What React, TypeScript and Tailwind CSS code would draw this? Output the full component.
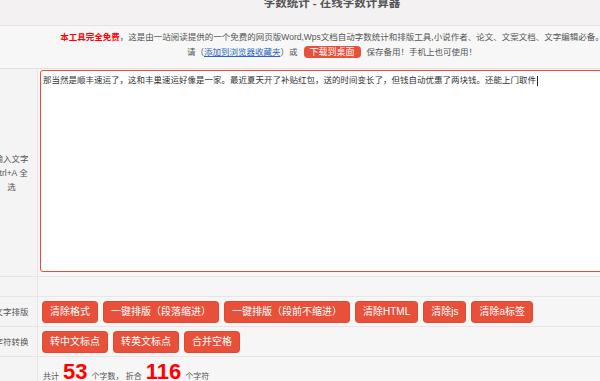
import React from 'react';

const font = "font-['Liberation_Sans','Noto_Sans_CJK_SC',sans-serif]";

function Btn({ children }: { children: React.ReactNode }) {
    return (
        <button className="h-[20px] px-[7px] rounded-[3px] bg-[#e8503a] text-white text-[10px] leading-[20px] whitespace-nowrap shadow-[0_0_0_1px_#e04a35]">
            {children}
        </button>
    );
}

function Row({ label, children, className = '' }: { label?: React.ReactNode; children?: React.ReactNode; className?: string }) {
    return (
        <div className={`flex border-b border-[#e6e6e6] ${className}`}>
            <div className="w-[52px] shrink-0 border-r border-[#e6e6e6] bg-[#f4f4f4] flex items-center justify-center px-[7px] text-center text-[8.5px] leading-[14px] text-[#555]">
                {label}
            </div>
            <div className="flex-1 bg-[#f6f6f6] flex items-center pl-[5px]">{children}</div>
        </div>
    );
}

export default function App() {
    const text =
        '那当然是顺丰速运了，这和丰巢速运好像是一家。最近夏天开了补贴红包，送的时间变长了，但钱自动优惠了两块钱。还能上门取件';

    return (
        <div className={`w-[600px] h-[381px] overflow-hidden bg-[#f4f4f4] ${font}`}>
            {/* title */}
            <div className="w-[664px] h-[26px] bg-[#f3f1f1] border-b border-[#e4e4e4] flex justify-center">
                <h1 className="mt-[-3px] text-[11.5px] leading-[12px] font-bold text-[#555] whitespace-nowrap">
                    字数统计 - 在线字数计算器
                </h1>
            </div>

            {/* intro */}
            <div className="w-[664px] h-[42px] bg-[#f7f7f7] flex flex-col items-center pt-[5px] text-[8.5px] text-[#555] whitespace-nowrap">
                <p className="leading-[12px]">
                    <span className="text-[#ff0000] font-bold">本工具完全免费</span>
                    ，这是由一站阅读提供的一个免费的网页版Word,Wps文档自动字数统计和排版工具,小说作者、论文、文案文档、文字编辑必备。
                </p>
                <p className="mt-[3px] flex items-center leading-[12px]">
                    请（<a className="text-[#2a64c5] underline">添加到浏览器收藏夹</a>）或
                    <span className="mx-[6px] h-[12px] px-[6px] rounded-[4px] bg-[#e8503a] text-white leading-[12px] text-[9px]">
                        下载到桌面
                    </span>
                    保存备用！手机上也可使用！
                </p>
            </div>

            {/* table */}
            <div className="ml-[-14px] w-[700px] border-t border-[#e2e2e2]">
                <Row
                    className="h-[208px]"
                    label={
                        <span>
                            输入文字
                            <br />
                            ctrl+A 全选
                        </span>
                    }
                >
                    <div className="self-start mt-[1px] ml-[-3px] w-[640px] h-[202px] border-[1.5px] border-[#ef4b3b] rounded-[3px] bg-white px-[2px] pt-[2px] text-[8.5px] leading-[14px] text-[#333] whitespace-nowrap">
                        {text}
                        <span className="inline-block w-px h-[10px] bg-[#222] align-middle ml-px" />
                    </div>
                </Row>
                <Row className="h-[20px]" />
                <Row className="h-[30px]" label="文字排版">
                    <div className="flex gap-[7px]">
                        <Btn>清除格式</Btn>
                        <Btn>一键排版（段落缩进）</Btn>
                        <Btn>一键排版（段前不缩进）</Btn>
                        <Btn>清除HTML</Btn>
                        <Btn>清除js</Btn>
                        <Btn>清除a标签</Btn>
                    </div>
                </Row>
                <Row className="h-[30px]" label="字符转换">
                    <div className="flex gap-[7px]">
                        <Btn>转中文标点</Btn>
                        <Btn>转英文标点</Btn>
                        <Btn>合并空格</Btn>
                    </div>
                </Row>
                <Row className="h-[30px]">
                    <div className="flex items-baseline text-[8px] text-[#555]">
                        <span>共计</span>
                        <span className="mx-[4px] text-[22px] leading-[22px] font-bold text-[#ff0000]">53</span>
                        <span>个字数，&nbsp;折合</span>
                        <span className="mx-[4px] text-[22px] leading-[22px] font-bold text-[#ff0000]">116</span>
                        <span>个字符</span>
                    </div>
                </Row>
            </div>
        </div>
    );
}
